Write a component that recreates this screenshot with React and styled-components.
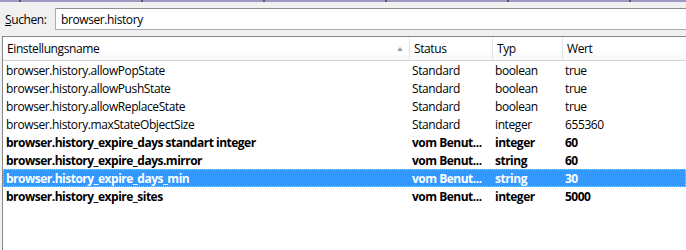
import React from 'react';
import styled, { createGlobalStyle } from 'styled-components';

const GlobalStyle = createGlobalStyle`
  html, body {
    margin: 0;
    padding: 0;
    background: #f0f0f0;
    height: 100%;
    overflow: hidden;
  }
  body {
    font-family: 'Open Sans', 'Noto Sans', sans-serif;
    font-size: 12px;
    letter-spacing: -0.4px;
    color: #000;
  }
  #root {
    height: 100%;
  }
`;

const Page = styled.div`
  height: 250px;
  display: flex;
  flex-direction: column;
`;

const TabStrip = styled.div`
  height: 2px;
  flex: none;
  background: repeating-linear-gradient(
    to right,
    #9b9bc4 0,
    #9b9bc4 19px,
    #555a66 19px,
    #555a66 21px,
    #9b9bc4 21px,
    #9b9bc4 122px
  );
`;

const SearchRow = styled.div`
  display: flex;
  align-items: center;
  padding: 6px 0 0 5px;
  flex: none;
`;

const Label = styled.label`
  width: 50px;
  flex: none;

  u {
    text-decoration: underline;
  }
`;

const SearchBox = styled.div`
  flex: 1;
  height: 20px;
  background: #fff;
  border: 1px solid #abadb3;
  border-top-color: #8e8f8f;
  border-right: none;
  display: flex;
  align-items: center;
  padding-left: 5px;
`;

const Tree = styled.div`
  flex: 1;
  margin: 6px 0 0 2px;
  background: #fff;
  border: 1px solid #828790;
  border-right: none;
  border-bottom: none;
`;

const cols = '406px 83px 70px 1fr';

const Header = styled.div`
  display: grid;
  grid-template-columns: ${cols};
  height: 23px;
  background: linear-gradient(#ffffff, #ffffff 60%, #f7f8fa);
  border-bottom: 1px solid #d5d5d5;
`;

const HeadCell = styled.div`
  position: relative;
  display: flex;
  align-items: center;
  padding-left: 4px;
  border-left: ${(p) => (p.first ? 'none' : '1px solid #e3e4e6')};
`;

const SortArrow = styled.span`
  position: absolute;
  right: 6px;
  top: 10px;
  width: 0;
  height: 0;
  border-left: 3.5px solid transparent;
  border-right: 3.5px solid transparent;
  border-bottom: 4px solid #97a5b8;
`;

const Row = styled.div`
  display: grid;
  grid-template-columns: ${cols};
  height: 18px;
  align-items: center;
  font-weight: ${(p) => (p.modified ? 700 : 400)};
  letter-spacing: ${(p) => (p.modified ? '-0.5px' : '-0.4px')};
  background: ${(p) => (p.selected ? '#3399ff' : 'transparent')};
  color: ${(p) => (p.selected ? '#fff' : '#000')};
  outline: ${(p) => (p.selected ? '1px dotted #e9c36b' : 'none')};
  outline-offset: -1px;
`;

const Cell = styled.div`
  padding-left: ${(p) => (p.first ? '3px' : '2px')};
  white-space: nowrap;
  overflow: hidden;
  margin-left: ${(p) => (p.first ? '0' : '1px')};
`;

const prefs = [
  ['browser.history.allowPopState', 'Standard', 'boolean', 'true'],
  ['browser.history.allowPushState', 'Standard', 'boolean', 'true'],
  ['browser.history.allowReplaceState', 'Standard', 'boolean', 'true'],
  ['browser.history.maxStateObjectSize', 'Standard', 'integer', '655360'],
  ['browser.history_expire_days standart integer', 'vom Benut...', 'integer', '60', true],
  ['browser.history_expire_days.mirror', 'vom Benut...', 'string', '60', true],
  ['browser.history_expire_days_min', 'vom Benut...', 'string', '30', true, true],
  ['browser.history_expire_sites', 'vom Benut...', 'integer', '5000', true],
];

const App = () => (
  <>
    <GlobalStyle />
    <Page>
      <TabStrip />
      <SearchRow>
        <Label>
          <u>S</u>uchen:
        </Label>
        <SearchBox>browser.history</SearchBox>
      </SearchRow>
      <Tree>
        <Header>
          <HeadCell first>
            Einstellungsname
            <SortArrow />
          </HeadCell>
          <HeadCell>Status</HeadCell>
          <HeadCell>Typ</HeadCell>
          <HeadCell>Wert</HeadCell>
        </Header>
        {prefs.map(([name, status, type, value, modified, selected]) => (
          <Row key={name} modified={modified} selected={selected}>
            <Cell first>{name}</Cell>
            <Cell>{status}</Cell>
            <Cell>{type}</Cell>
            <Cell>{value}</Cell>
          </Row>
        ))}
      </Tree>
    </Page>
  </>
);

export default App;
